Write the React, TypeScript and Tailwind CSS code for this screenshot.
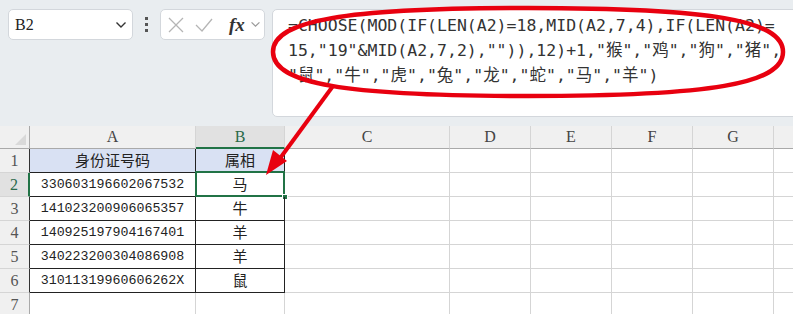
import clsx from 'clsx';

const cols = [
  { key: 'A', w: 'w-[166px]' },
  { key: 'B', w: 'w-[89px]' },
  { key: 'C', w: 'w-[165px]' },
  { key: 'D', w: 'w-[81px]' },
  { key: 'E', w: 'w-[81px]' },
  { key: 'F', w: 'w-[81px]' },
  { key: 'G', w: 'w-[81px]' },
  { key: '', w: 'w-[81px]' },
];

const rows: [string, string][] = [
  ['身份证号码', '属相'],
  ['330603196602067532', '马'],
  ['141023200906065357', '牛'],
  ['140925197904167401', '羊'],
  ['340223200304086908', '羊'],
  ['31011319960606262X', '鼠'],
  ['', ''],
];

const formula = [
  '=CHOOSE(MOD(IF(LEN(A2)=18,MID(A2,7,4),IF(LEN(A2)=',
  '15,"19"&MID(A2,7,2),"")),12)+1,"猴","鸡","狗","猪",',
  '"鼠","牛","虎","兔","龙","蛇","马","羊")',
];

const serif = 'font-["Liberation_Serif","Noto_Sans_CJK_SC",serif]';
const cjk = 'font-["Noto_Sans_CJK_SC",sans-serif]';

function Chevron({ className }: { className?: string }) {
  return (
    <svg viewBox="0 0 12 8" className={className} fill="none" stroke="currentColor" strokeWidth="1.4">
      <path d="M1.5 1.5 L6 6 L10.5 1.5" />
    </svg>
  );
}

function FormulaBar() {
  return (
    <div className="flex h-[126px] items-start overflow-hidden bg-[#e9edf0] pl-[8px] pt-[9px]">
      <div className="flex h-[31px] w-[125px] shrink-0 items-center justify-between rounded-[5px] border border-[#d3d7dc] bg-white pl-[6px] pr-[5px]">
        <span className={clsx(serif, 'text-[16px] text-[#222]')}>B2</span>
        <Chevron className="h-[8px] w-[12px] text-[#333]" />
      </div>
      <div className="flex h-[31px] w-[27px] shrink-0 flex-col items-center justify-center gap-[3px]">
        <span className="h-[3px] w-[3px] bg-[#555]" />
        <span className="h-[3px] w-[3px] bg-[#555]" />
        <span className="h-[3px] w-[3px] bg-[#555]" />
      </div>
      <div className="flex h-[31px] w-[105px] shrink-0 items-center rounded-[5px] border border-[#d3d7dc] bg-white pl-[7px]">
        <svg viewBox="0 0 16 16" className="h-[16px] w-[16px] text-[#b5b5b5]" fill="none" stroke="currentColor" strokeWidth="1.3">
          <path d="M1 1 L15 15 M15 1 L1 15" />
        </svg>
        <svg viewBox="0 0 18 14" className="ml-[11px] h-[14px] w-[18px] text-[#b5b5b5]" fill="none" stroke="currentColor" strokeWidth="1.3">
          <path d="M1 7 L7 13 L17 1" />
        </svg>
        <span className="ml-[16px] font-['Liberation_Serif',serif] text-[19px] font-bold italic leading-none text-[#333]">fx</span>
        <Chevron className="ml-[5px] h-[7px] w-[11px] text-[#999]" />
      </div>
      <div className="ml-[7px] h-[108px] w-[560px] shrink-0 rounded-[5px] border border-[#d3d7dc] bg-white pl-[15px] pt-[3px]">
        {formula.map((line) => (
          <div
            key={line}
            className="whitespace-pre font-['DejaVu_Sans_Mono','Noto_Sans_CJK_SC',monospace] text-[16.5px] leading-[25px] text-[#333]"
          >
            {line}
          </div>
        ))}
      </div>
    </div>
  );
}

function Sheet() {
  return (
    <div className="overflow-hidden bg-white">
      <div className="flex h-[23px]">
        <div className="relative w-[30px] shrink-0 border-r border-b border-[#a9a9a9] bg-[#f0f0f0]">
          <svg viewBox="0 0 12 12" className="absolute right-[3px] bottom-[3px] h-[11px] w-[11px]">
            <path d="M12 0 L12 12 L0 12 Z" fill="#d9d9d9" />
          </svg>
        </div>
        {cols.map((c, idx) => (
          <div
            key={idx}
            className={clsx(
              c.w,
              serif,
              'flex shrink-0 items-center justify-center border-r border-[#d5d5d5] text-[16px]',
              c.key === 'B'
                ? 'border-b-2 border-b-[#217346] bg-[#e1e1e1] text-[#2a6a4a]'
                : 'border-b border-b-[#a9a9a9] bg-[#f0f0f0] text-[#444]'
            )}
          >
            {c.key}
          </div>
        ))}
      </div>
      {rows.map(([a, b], i) => {
        const inTable = i < 6;
        const head = i === 0;
        const sel = i === 1;
        return (
          <div key={i} className="flex h-[24px]">
            <div
              className={clsx(
                serif,
                'flex w-[30px] shrink-0 items-center justify-center border-b border-b-[#d5d5d5] text-[16px]',
                sel ? 'border-r-2 border-r-[#217346] bg-[#e1e1e1] text-[#2a6a4a]' : 'border-r border-r-[#333] bg-[#f0f0f0] text-[#555]',
                i === 6 && 'border-r-[#a9a9a9]'
              )}
            >
              {i + 1}
            </div>
            <div
              className={clsx(
                'flex w-[166px] shrink-0 items-center justify-center border-r border-b',
                inTable ? 'border-[#222]' : 'border-[#d5d5d5]',
                head ? clsx(cjk, 'bg-[#d9e1f3] text-[15px] text-[#222]') : "font-['Liberation_Mono',monospace] text-[13.3px] text-[#222]"
              )}
            >
              {a}
            </div>
            <div
              className={clsx(
                cjk,
                'relative flex w-[89px] shrink-0 items-center justify-center border-r border-b text-[15px] text-[#222]',
                inTable ? 'border-[#222]' : 'border-[#d5d5d5]',
                head && 'bg-[#d9e1f3]'
              )}
            >
              {b}
              {sel && (
                <>
                  <div className="absolute -top-[2px] -left-[1px] right-[-1px] bottom-[-1px] border-2 border-[#217346]" />
                  <div className="absolute -right-[4px] -bottom-[4px] h-[6px] w-[6px] border border-white bg-[#217346]" />
                </>
              )}
            </div>
            {cols.slice(2).map((c, idx) => (
              <div key={idx} className={clsx(c.w, 'shrink-0 border-r border-b border-[#d5d5d5]')} />
            ))}
          </div>
        );
      })}
    </div>
  );
}

function Annotation() {
  // hand-drawn red ellipse + arrow laid over the screenshot
  const cx = 528, cy = 52, rx = 255, ry = 44, k = 0.72;
  const d = [
    `M ${cx - rx} ${cy}`,
    `C ${cx - rx} ${cy - ry * k} ${cx - rx * k} ${cy - ry} ${cx} ${cy - ry}`,
    `C ${cx + rx * k} ${cy - ry} ${cx + rx} ${cy - ry * k} ${cx + rx} ${cy}`,
    `C ${cx + rx} ${cy + ry * k} ${cx + rx * k} ${cy + ry} ${cx} ${cy + ry}`,
    `C ${cx - rx * k} ${cy + ry} ${cx - rx} ${cy + ry * k} ${cx - rx} ${cy}`,
    'Z',
  ].join(' ');
  return (
    <svg className="pointer-events-none absolute top-0 left-0 h-[314px] w-[793px]" viewBox="0 0 793 314">
      <path d={d} fill="none" stroke="#e8000f" strokeWidth="4.5" />
      <line x1="333" y1="86" x2="281" y2="157" stroke="#e8000f" strokeWidth="4" />
      <polygon points="266,175 287,161 273,150" fill="#e8000f" />
    </svg>
  );
}

export default function App() {
  return (
    <div className="relative h-[314px] w-[793px] overflow-hidden bg-white">
      <FormulaBar />
      <Sheet />
      <Annotation />
    </div>
  );
}
